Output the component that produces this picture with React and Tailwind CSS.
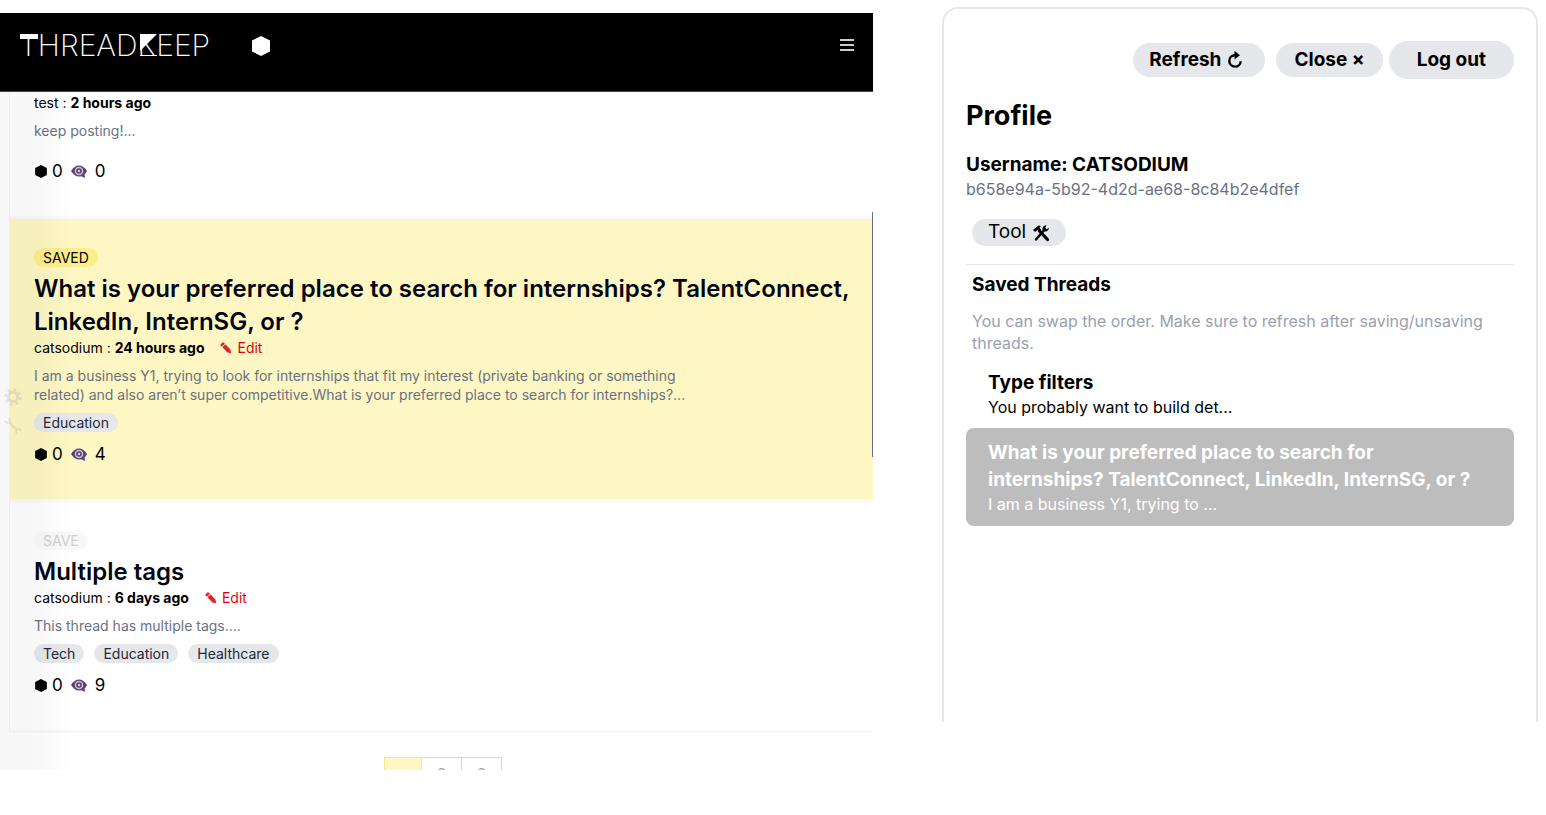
import React from "react";

const Hexagon = ({ className }) => (
  <svg viewBox="0 0 18 20" className={className} fill="currentColor" aria-hidden="true">
    <path d="M9 0 18 4.6v10.8L9 20 0 15.4V4.6z" />
  </svg>
);

const Eye = () => (
  <svg viewBox="0 0 16 13" className="h-[13px] w-4" aria-hidden="true">
    <path d="M0 6Q3.5 .5 8 .5T16 6q-1 2.3-2.400 3.600L14 13l-3.600-1.700Q9.500 11.500 8 11.500 3.500 11.500 0 6z" fill="#5d3f7b" />
    <circle cx="8" cy="6" r="4.300" fill="#c9bdd3" />
    <circle cx="8" cy="6" r="2.800" fill="#5b4470" />
    <circle cx="8" cy="6" r="1.200" fill="#d9d0e0" />
  </svg>
);

const Pencil = () => (
  <svg viewBox="0 0 12 12" className="size-3" fill="#dc2626" aria-hidden="true">
    <path d="M.6 2.400 2.400.6Q3.200 0 4 .8l.9.900-3 3L.9 3.800Q0 3.100.6 2.400zM2.400 5.200l3-3 5 5.200.8 3.800-3.800-.8z" />
  </svg>
);

const Logo = () => (
  <svg viewBox="0 0 212 40" className="h-10 w-[212px]" fill="#fff" role="img" aria-label="ThreadKeep">
    <text x="-1" y="30" fontFamily="Inter, sans-serif" fontWeight="200" fontSize="30">
      THREADKEEP
    </text>
    <path d="M0 8h18v5H0zM120 8h17l-10 10-7 7zM120 29h17v1h-17z" />
  </svg>
);

const Refresh = () => (
  <svg viewBox="0 0 16 18" className="h-[18px] w-4" aria-hidden="true">
    <path d="M9 4.200H7.500a5.700 5.700 0 1 0 6.200 6" fill="none" stroke="#000" strokeWidth="2.400" />
    <path d="M7.500 0l5.500 4.200-5.500 4.300z" />
  </svg>
);

const Tools = () => (
  <svg viewBox="0 0 18 18" className="size-[18px]" aria-hidden="true">
    <path d="M1 6 6.500 1.500 9 2 7.500 3.800l2 2.200-2.400 2.200L5.200 6 3.300 8z" />
    <path d="M7.500 7 15.500 15.500" stroke="#000" strokeWidth="3.200" strokeLinecap="round" />
    <path d="M12.500 5.800 4 15.500" stroke="#000" strokeWidth="2.400" strokeLinecap="round" />
    <path d="M14.500 1.200a3.700 3.700 0 0 0-3.700 5.300 3.700 3.700 0 0 0 6.200-2.700l-2.200 1.500-1.600-1.400z" />
  </svg>
);

const Gear = () => (
  <svg viewBox="0 0 18 18" className="size-[18px]" fill="none" aria-hidden="true">
    <circle cx="9" cy="9" r="7.500" stroke="#8a6a8a" strokeWidth="2.500" strokeDasharray="3 2.900" />
    <circle cx="9" cy="9" r="4.700" stroke="#8a6a8a" strokeWidth="3" />
  </svg>
);

const Wrench = () => (
  <svg viewBox="0 0 18 18" className="size-[18px]" fill="none" stroke="#8a6a8a" strokeWidth="2" aria-hidden="true">
    <path d="M5 5l8 8M1 4q1 2.500 3.500 1.500T5 1M17 14q-1-2.500-3.500-1.500T13 17" />
  </svg>
);

const threads = [
  { author: "test", time: "2 hours ago", body: "keep posting!...", views: 0, tags: [] },
  {
    saved: true,
    title: "What is your preferred place to search for internships? TalentConnect, LinkedIn, InternSG, or ?",
    author: "catsodium",
    time: "24 hours ago",
    body: "I am a business Y1, trying to look for internships that fit my interest (private banking or something related) and also aren’t super competitive.What is your preferred place to search for internships?...",
    views: 4,
    tags: ["Education"],
    editable: true,
  },
  {
    title: "Multiple tags",
    author: "catsodium",
    time: "6 days ago",
    body: "This thread has multiple tags....",
    views: 9,
    tags: ["Tech", "Education", "Healthcare"],
    editable: true,
  },
];

function Thread({ t }) {
  return (
    <article className={`border-b-[3px] border-[#f8f9fd] px-6 pb-[33px] ${t.saved ? "bg-[#fef7c3]" : ""} ${t.title ? "pt-[29px]" : "pt-px"}`}>
      {t.title && (
        <>
          <button
            className={`mb-[5px] block h-[19px] rounded-full px-[9px] text-sm leading-[19px] ${
              t.saved ? "bg-[#feee8a] text-black" : "bg-[#f9f9f9] text-[#cfcfcf]"
            }`}
          >
            {t.saved ? "SAVED" : "SAVE"}
          </button>
          <h2 className="text-2xl leading-[33px] font-semibold text-[#030712]">{t.title}</h2>
        </>
      )}
      <div className="flex items-center text-sm leading-[19px]">
        <p>
          {t.author} : <b>{t.time}</b>
        </p>
        {t.editable && (
          <button className="ml-4 flex items-center gap-[5px] text-red-600">
            <Pencil />
            Edit
          </button>
        )}
      </div>
      <p className="my-[9px] max-w-[670px] text-sm leading-[19px] text-gray-500">{t.body}</p>
      <div className="flex gap-[10px] text-sm leading-[19px] text-gray-800">
        {t.tags.map((tag) => (
          <span key={tag} className="rounded-full bg-gray-200 px-[9px]">
            {tag}
          </span>
        ))}
      </div>
      <div className="mt-[10px] flex items-center text-[17px] leading-6">
        <button className="flex items-center gap-[5px] pl-px" aria-label="Vote">
          <Hexagon className="h-[13px] w-3" />0
        </button>
        <span className="ml-2 flex items-center gap-2">
          <Eye />
          {t.views}
        </span>
      </div>
    </article>
  );
}

export default function App() {
  return (
    <div className="flex min-h-screen items-start justify-between bg-white font-['Inter',sans-serif] text-black">
      <main className="relative mt-[13px] h-[757px] w-[56.5%] overflow-hidden">
        <header className="flex h-[79px] items-start justify-between border-b border-[#444] bg-black pt-[13px] pr-[19px] pl-5 text-white">
          <div className="flex items-center gap-5">
            <Logo />
            <Hexagon className="h-5 w-[18px]" />
          </div>
          <button aria-label="Menu" className="mt-[13px] flex h-3 w-[14px] flex-col justify-between">
            <span className="h-[2px] w-full bg-[#ccc]" />
            <span className="h-[2px] w-full bg-[#ccc]" />
            <span className="h-[2px] w-full bg-[#ccc]" />
          </button>
        </header>
        <div className="ml-[9px] border-l border-[#f3f4f8]">
          {threads.map((t) => (
            <Thread key={t.time} t={t} />
          ))}
        </div>
        <nav className="mt-6 ml-[384px] flex h-[34px] text-center text-sm text-gray-400" aria-label="Pages">
          <button className="w-[38px] border border-[#fde68a] bg-[#fef7c3] text-[#fef7c3]">1</button>
          <button className="w-10 border border-l-0 border-gray-300">2</button>
          <button className="w-10 border border-l-0 border-gray-300">3</button>
        </nav>
        <div className="pointer-events-none absolute top-[79px] bottom-0 left-0 w-[72px] bg-linear-to-r from-black/3 from-50% to-transparent" />
        <div className="absolute top-[375px] left-1 flex flex-col gap-[11px] opacity-15">
          <Gear />
          <Wrench />
        </div>
        <div className="absolute top-[199px] right-0 h-[245px] w-px bg-gray-500" />
      </main>

      <aside className="mt-[7px] mr-2 h-[715px] w-[596px] rounded-t-2xl border-2 border-b-0 border-gray-200 px-[22px] pt-8">
        <div className="flex items-center justify-end text-[19px] font-bold">
          <button className="mr-[11px] flex h-[34px] items-center gap-[6px] rounded-full bg-gray-200 pr-[22px] pl-4">
            Refresh <Refresh />
          </button>
          <button className="mr-[6px] h-[34px] rounded-full bg-gray-200 px-[18px]">Close ×</button>
          <button className="h-[38px] rounded-full bg-gray-200 px-7">Log out</button>
        </div>
        <h1 className="mt-[19px] text-[27px] leading-9 font-bold">Profile</h1>
        <h2 className="mt-[17px] text-[19px] leading-[27px] font-bold">Username: CATSODIUM</h2>
        <p className="text-base leading-[22px] text-gray-500">b658e94a-5b92-4d2d-ae68-8c84b2e4dfef</p>
        <button className="mt-[19px] ml-[6px] flex h-[27px] items-center gap-[6px] rounded-full bg-gray-200 px-4 text-[19px]">
          Tool <Tools />
        </button>
        <section className="mt-[18px] border-t border-gray-200 pt-[6px]">
          <h2 className="pl-[6px] text-[19px] leading-[27px] font-bold">Saved Threads</h2>
          <p className="mt-3 pl-[6px] text-base leading-[22px] text-gray-400">
            You can swap the order. Make sure to refresh after saving/unsaving threads.
          </p>
          <a href="#type-filters" className="mt-[15px] block px-[22px]">
            <h3 className="text-[19px] leading-[27px] font-bold">Type filters</h3>
            <p className="text-base leading-[22px]">You probably want to build det...</p>
          </a>
          <a href="#internships" className="mt-[10px] block rounded-lg bg-[#bdbdbd] px-[22px] py-[11px] text-white">
            <h3 className="text-[19px] leading-[27px] font-bold">
              What is your preferred place to search for internships? TalentConnect, LinkedIn, InternSG, or ?
            </h3>
            <p className="text-base leading-[22px]">I am a business Y1, trying to ...</p>
          </a>
        </section>
      </aside>
    </div>
  );
}
